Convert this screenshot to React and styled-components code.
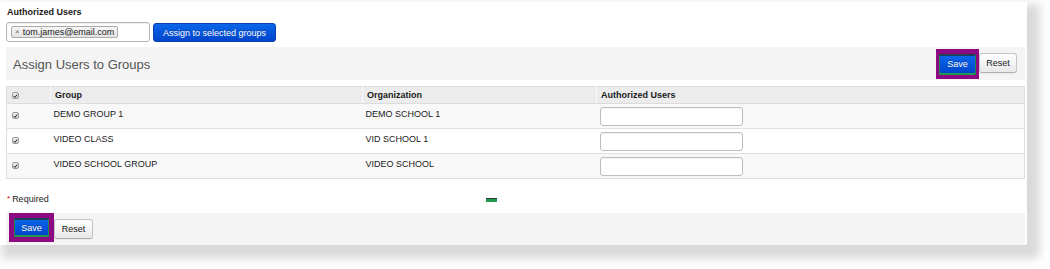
import React from "react";
import styled, { createGlobalStyle } from "styled-components";

const Global = createGlobalStyle`
  html, body { margin: 0; padding: 0; background: #fff; }
  body { font-family: "Liberation Sans", Arial, sans-serif; color: #222; }
  * { box-sizing: border-box; }
`;

const Stage = styled.div`
  width: 1050px;
  height: 269px;
  padding-top: 2px;
  background: #fff;
`;

const Card = styled.div`
  width: 1027px;
  height: 243px;
  background: #fff;
  padding: 4px 2px 0 6px;
  border-radius: 0 0 2px 0;
  box-shadow: 7px 8px 10px 6px rgba(0, 0, 0, 0.15);
  display: flex;
  flex-direction: column;
`;

const FieldLabel = styled.div`
  font-size: 9px;
  font-weight: bold;
  line-height: 11px;
  padding-left: 1px;
  margin-top: 1px;
  color: #1a1a1a;
`;

const AssignRow = styled.div`
  display: flex;
  align-items: flex-start;
  gap: 3px;
  margin-top: 4px;
`;

const TagInput = styled.div`
  display: flex;
  align-items: flex-start;
  width: 144px;
  height: 20px;
  border: 1px solid #b5b5b5;
  border-radius: 3px;
  background: #fff;
  box-shadow: inset 0 1px 1px rgba(0, 0, 0, 0.06);
  padding: 3px 0 0 4px;
`;

const Tag = styled.span`
  display: flex;
  align-items: center;
  height: 12px;
  padding: 0 3px 0 3px;
  border: 1px solid #aaa;
  border-radius: 2px;
  background: linear-gradient(#f6f6f6, #e4e4e4);
  font-size: 9px;
  line-height: 10px;
  color: #1a1a1a;
`;

const TagX = styled.span`
  font-size: 8px;
  color: #666;
  margin-right: 3px;
`;

const PrimaryButton = styled.button`
  font-family: "Liberation Sans", Arial, sans-serif;
  font-size: 9px;
  color: #fff;
  height: 19px;
  padding: 0 9px;
  margin-top: 1px;
  border: 1px solid #0a3fae;
  border-radius: 3px;
  background: linear-gradient(#0b66ea, #0045cc);
  text-shadow: 0 -1px 0 rgba(0, 0, 0, 0.25);
  cursor: pointer;
`;

const MarkedSave = styled.button`
  font-family: "Liberation Sans", Arial, sans-serif;
  font-size: 9px;
  color: #fff;
  width: ${(p) => p.$w}px;
  height: ${(p) => p.$h}px;
  padding: 0;
  border: 1px solid #1f8a4c;
  border-top: 2px solid #1b4158;
  border-bottom: 2px solid #1f9a4e;
  border-radius: 1px;
  background: linear-gradient(#0b66ea, #0045cc);
  text-shadow: 0 -1px 0 rgba(0, 0, 0, 0.3);
`;

const Highlight = styled.div`
  display: flex;
  background: #8d0a82;
  padding: ${(p) => p.$pad};
`;

const DefaultButton = styled.button`
  font-family: "Liberation Sans", Arial, sans-serif;
  font-size: 9px;
  color: #1a1a1a;
  width: ${(p) => p.$w}px;
  height: ${(p) => p.$h}px;
  margin-top: ${(p) => p.$mt || 0}px;
  padding: 0;
  border: 1px solid #c6c6c6;
  border-bottom-color: #b0b0b0;
  border-radius: 3px;
  background: linear-gradient(#ffffff, #e8e8e8);
  box-shadow: 0 1px 1px rgba(0, 0, 0, 0.05);
`;

const Panel = styled.div`
  display: flex;
  align-items: ${(p) => p.$align || "center"};
  justify-content: ${(p) => p.$justify || "flex-start"};
  background: #f4f4f4;
  height: ${(p) => p.$h}px;
  margin-top: ${(p) => p.$mt}px;
  padding: ${(p) => p.$pad};
`;

const PanelTitle = styled.div`
  font-size: 13px;
  color: #555;
  margin-top: 1px;
`;

const ButtonGroup = styled.div`
  display: flex;
  align-items: flex-start;
`;

const Table = styled.table`
  margin-top: 6px;
  width: 1019px;
  border-collapse: collapse;
  border: 1px solid #dcdcdc;
  table-layout: fixed;
  font-size: 9px;
`;

const HeadCell = styled.th`
  text-align: left;
  font-weight: bold;
  height: 17px;
  padding: 0 0 0 4px;
  background: #ececec;
  border-left: 1px solid #f9f9f9;
  border-bottom: 1px solid #dcdcdc;
  color: #1a1a1a;
  &:first-child { border-left: none; }
`;

const Row = styled.tr`
  background: ${(p) => (p.$striped ? "#f8f8f8" : "#fff")};
  border-bottom: 1px solid #e0e0e0;
`;

const Cell = styled.td`
  vertical-align: top;
  padding: 5px 0 0 3px;
  height: 25px;
  color: #1a1a1a;
`;

const InputCell = styled.td`
  vertical-align: top;
  padding: 3px 0 0 3px;
  height: 25px;
`;

const TextInput = styled.input`
  display: block;
  width: 143px;
  height: 19px;
  border: 1px solid #bdbdbd;
  border-radius: 3px;
  background: #fff;
  box-shadow: inset 0 1px 1px rgba(0, 0, 0, 0.05);
  padding: 0 4px;
  font-size: 9px;
`;

const CheckBox = styled.span`
  display: inline-flex;
  align-items: center;
  justify-content: center;
  width: 7px;
  height: 7px;
  margin: ${(p) => (p.$head ? "0 0 0 1px" : "2px 0 0 2px")};
  border: 1px solid #9a9a9a;
  border-radius: 2px;
  background: linear-gradient(#f2f2f2, #cfcfcf);
  vertical-align: middle;
`;

const RequiredRow = styled.div`
  display: flex;
  align-items: center;
  margin-top: 14px;
  height: 12px;
  font-size: 9px;
  padding-left: 1px;
  color: #1a1a1a;
`;

const Star = styled.span`
  color: #c00;
  margin-right: 2px;
  font-size: 8px;
  position: relative;
  top: -1px;
`;

const StatusBar = styled.span`
  display: block;
  width: 11px;
  height: 4px;
  margin-left: 437px;
  margin-top: 2px;
  background: #1f9a4c;
  border-top: 1px solid #2b3b33;
`;

const Check = () => (
  <svg width="6" height="6" viewBox="0 0 6 6">
    <path d="M1 3.2 L2.4 4.6 L5 1.2" fill="none" stroke="#222" strokeWidth="1.2" />
  </svg>
);

const rows = [
  { group: "DEMO GROUP 1", org: "DEMO SCHOOL 1" },
  { group: "VIDEO CLASS", org: "VID SCHOOL 1" },
  { group: "VIDEO SCHOOL GROUP", org: "VIDEO SCHOOL" },
];

export default function App() {
  return (
    <Stage>
      <Global />
      <Card>
        <FieldLabel>Authorized Users</FieldLabel>
        <AssignRow>
          <TagInput>
            <Tag>
              <TagX>×</TagX>tom.james@email.com
            </Tag>
          </TagInput>
          <PrimaryButton>Assign to selected groups</PrimaryButton>
        </AssignRow>

        <Panel $h={33} $mt={5} $justify="space-between" $pad="0 8px 0 7px">
          <PanelTitle>Assign Users to Groups</PanelTitle>
          <ButtonGroup>
            <Highlight $pad="5px 3px 4px 3px">
              <MarkedSave $w={37} $h={21}>Save</MarkedSave>
            </Highlight>
            <DefaultButton $w={38} $h={20} $mt={4}>Reset</DefaultButton>
          </ButtonGroup>
        </Panel>

        <Table>
          <colgroup>
            <col style={{ width: 44 }} />
            <col style={{ width: 312 }} />
            <col style={{ width: 234 }} />
            <col />
          </colgroup>
          <thead>
            <tr>
              <HeadCell>
                <CheckBox $head>
                  <Check />
                </CheckBox>
              </HeadCell>
              <HeadCell>Group</HeadCell>
              <HeadCell>Organization</HeadCell>
              <HeadCell>Authorized Users</HeadCell>
            </tr>
          </thead>
          <tbody>
            {rows.map((r, i) => (
              <Row key={r.group} $striped={i !== 1}>
                <Cell>
                  <CheckBox>
                    <Check />
                  </CheckBox>
                </Cell>
                <Cell>{r.group}</Cell>
                <Cell>{r.org}</Cell>
                <InputCell>
                  <TextInput type="text" />
                </InputCell>
              </Row>
            ))}
          </tbody>
        </Table>

        <RequiredRow>
          <Star>*</Star>Required
          <StatusBar />
        </RequiredRow>

        <Panel $h={32} $mt={8} $align="flex-start" $pad="0 0 0 3px">
          <Highlight $pad="5px 5px 5px 5px">
            <MarkedSave $w={35} $h={19}>Save</MarkedSave>
          </Highlight>
          <DefaultButton $w={39} $h={20} $mt={6}>Reset</DefaultButton>
        </Panel>
      </Card>
    </Stage>
  );
}
